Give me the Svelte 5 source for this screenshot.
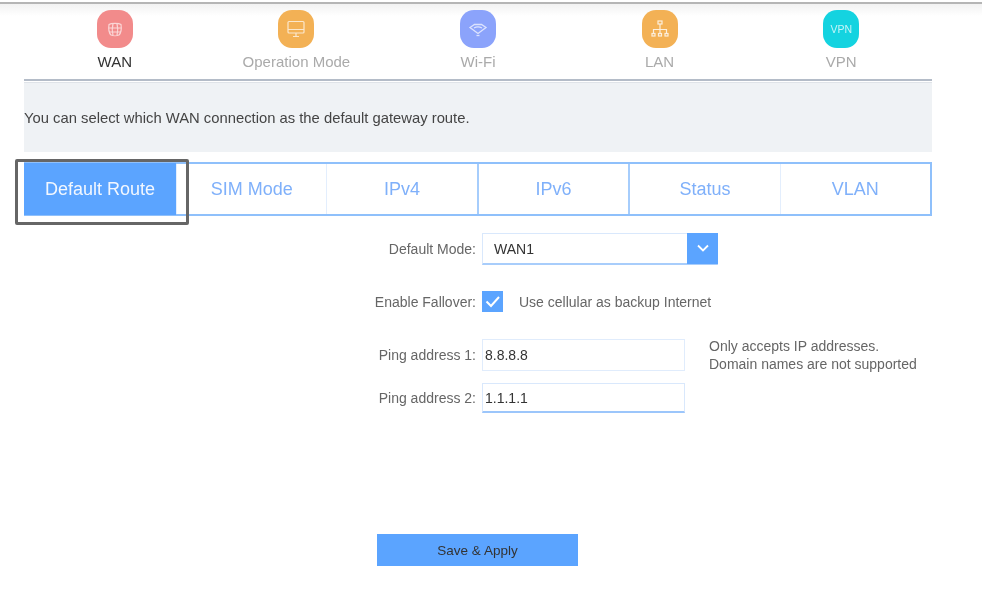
<script>
    const navItems = [
        { id: 'wan', label: 'WAN', color: '#f28b8b', active: true },
        { id: 'mode', label: 'Operation Mode', color: '#f3b155' },
        { id: 'wifi', label: 'Wi-Fi', color: '#8ba3fb' },
        { id: 'lan', label: 'LAN', color: '#f3b155' },
        { id: 'vpn', label: 'VPN', color: '#14d3e0' }
    ];

    const tabs = ['Default Route', 'SIM Mode', 'IPv4', 'IPv6', 'Status', 'VLAN'];
</script>

<div class="page">
    <div class="topbar"></div>

    <div class="content">
        <nav class="nav">
            {#each navItems as item}
                <div class="nav__item">
                    <div class="nav__icon" style={`background-color: ${item.color};`}>
                        {#if item.id === 'wan'}
                            <svg width="20" height="20" viewBox="0 0 20 20" fill="none" stroke="#fff" stroke-width="1.2" opacity="0.65">
                                <path d="M4 5.500c2-1.500 10-1.500 12 0 .6 4 .4 8-2 10.500-2 1-6 1-8 0-2.400-2.500-2.600-6.500-2-10.500z" />
                                <path d="M3.800 9h12.400M4.500 13h11M8 4.500c-1 4-1 8 0 12M12 4.500c1 4 1 8 0 12" />
                            </svg>
                        {:else if item.id === 'mode'}
                            <svg width="22" height="22" viewBox="0 0 22 22" fill="none" stroke="#fff" stroke-width="1.2" opacity="0.7">
                                <rect x="3" y="3.500" width="16" height="11.500" rx="1" />
                                <path d="M3 11.500h16M8 18.500h6M11 15v3.500" />
                            </svg>
                        {:else if item.id === 'wifi'}
                            <svg width="22" height="22" viewBox="0 0 22 22" fill="none" stroke="#fff" stroke-width="1.300" opacity="0.7">
                                <path d="M3 9.500 7.500 6.500h7L19 9.500 11 15.500z" />
                                <path d="M7 10c2.400-1.400 5.600-1.400 8 0" />
                                <path d="M9.500 17.500h3" />
                            </svg>
                        {:else if item.id === 'lan'}
                            <svg width="22" height="22" viewBox="0 0 22 22" fill="none" stroke="#fff" stroke-width="1.200" opacity="0.8">
                                <rect x="9" y="3" width="4" height="3" />
                                <path d="M11 6v9M4.500 15v-3.500h13V15" />
                                <rect x="3" y="15.500" width="3" height="2.500" />
                                <rect x="9.500" y="15.500" width="3" height="2.500" />
                                <rect x="16" y="15.500" width="3" height="2.500" />
                            </svg>
                        {:else}
                            <span class="nav__vpn">VPN</span>
                        {/if}
                    </div>
                    <span class="nav__label" class:nav__label--active={item.active}>{item.label}</span>
                </div>
            {/each}
        </nav>

        <div class="info">
            <p class="info__text">You can select which WAN connection as the default gateway route.</p>
        </div>

        <div class="tabs">
            {#each tabs as tab, i}
                <div class="tab" class:tab--active={i === 0}>{tab}</div>
            {/each}
            <div class="tabs__focus"></div>
        </div>

        <form class="form">
            <div class="form__row form__row--select">
                <span class="form__label">Default Mode:</span>
                <div class="select">
                    <span class="select__value">WAN1</span>
                    <span class="select__arrow">
                        <svg width="14" height="10" viewBox="0 0 14 10" fill="none" stroke="#fff" stroke-width="1.800">
                            <path d="M2 2.500 7 7.500 12 2.500" />
                        </svg>
                    </span>
                </div>
            </div>

            <div class="form__row form__row--check">
                <span class="form__label">Enable Fallover:</span>
                <span class="check">
                    <svg width="21" height="21" viewBox="0 0 21 21" fill="none" stroke="#fff" stroke-width="2">
                        <path d="M4.500 10.500 9 15 17 6" />
                    </svg>
                </span>
                <span class="check__text">Use cellular as backup Internet</span>
            </div>

            <div class="form__row form__row--ping1">
                <span class="form__label">Ping address 1:</span>
                <div class="input">8.8.8.8</div>
                <div class="help">Only accepts IP addresses.<br />Domain names are not supported</div>
            </div>

            <div class="form__row form__row--ping2">
                <span class="form__label">Ping address 2:</span>
                <div class="input input--focus">1.1.1.1</div>
            </div>

            <div class="form__actions">
                <div class="save">Save &amp; Apply</div>
            </div>
        </form>
    </div>
</div>

<style>
    :global(body) {
        background-color: #fff;
    }

    .page {
        position: relative;

        width: 982px;
        height: 592px;

        font-family: "Liberation Sans", Arial, sans-serif;
        color: #555;

        overflow: hidden;
        filter: blur(0.7px);
    }

    .topbar {
        height: 12px;
        margin-top: 2px;

        border-top: 2px solid #b5b5b5;
        background: linear-gradient(#f2f2f2, #fff);
    }

    .content {
        width: 908px;
        margin-left: 24px;
    }

    .nav {
        display: flex;

        margin-top: -6px;
        height: 69px;

        border-bottom: 2px solid #b4bcc8;
    }

    .nav__item {
        flex: 1;

        display: flex;
        flex-direction: column;
        align-items: center;
    }

    .nav__icon {
        display: flex;
        align-items: center;
        justify-content: center;

        width: 36px;
        height: 38px;

        border-radius: 14px;
    }

    .nav__vpn {
        font-size: 10.5px;
        color: #fff;
        opacity: 0.75;
    }

    .nav__label {
        margin-top: 6px;

        font-size: 15px;
        line-height: 16px;
        color: #aaa;
    }

    .nav__label--active {
        color: #333;
    }

    .info {
        display: flex;
        align-items: center;

        height: 69px;
        margin-top: 1px;

        border-top: 1px solid #dfe3e8;
        background-color: #eff2f5;
    }

    .info__text {
        margin: 0;

        font-size: 14.8px;
        color: #444;
    }

    .tabs {
        position: relative;

        display: flex;

        height: 54px;
        margin-top: 10px;
        box-sizing: border-box;

        border: 2px solid #8fc0fb;
    }

    .tab {
        flex: 1;

        display: flex;
        align-items: center;
        justify-content: center;

        font-size: 18px;
        color: #7fb0fa;

        border-left: 1px solid #e3eefd;
    }

    .tab:nth-child(4),
    .tab:nth-child(5) {
        border-left: 2px solid #a6cdfc;
    }

    .tab--active {
        flex: 0 0 152px;
        margin: -1px 0 -1px -2px;

        border-left: none;

        color: #f2f7ff;
        background-color: #5ba4ff;
    }

    .tabs__focus {
        position: absolute;
        top: -5px;
        left: -11px;

        width: 174px;
        height: 66px;
        box-sizing: border-box;

        border: 3px solid #666;
        border-radius: 2px;
    }

    .form {
        display: flex;
        flex-direction: column;
        margin-top: 17px;

        font-size: 14px;
        color: #666;
    }

    .form__row {
        display: flex;
        align-items: center;
    }

    .form__label {
        width: 452px;
        margin-right: 6px;

        text-align: right;
    }

    .select {
        display: flex;
        align-items: center;
        justify-content: space-between;

        width: 236px;
        height: 32px;
        box-sizing: border-box;
        padding-left: 11px;

        border: 1px solid #d9e8fc;
        border-bottom: 2px solid #a8cdfb;

        color: #333;
    }

    .select__arrow {
        display: flex;
        align-items: center;
        justify-content: center;

        width: 31px;
        height: 31px;
        margin-top: -1px;
        margin-right: -1px;

        background-color: #5ba4ff;
    }

    .form__row--check {
        margin-top: 26px;
    }

    .check {
        display: flex;

        width: 21px;
        height: 21px;

        background-color: #5ba4ff;
    }

    .check__text {
        margin-left: 16px;
    }

    .form__row--ping1 {
        margin-top: 25px;
    }

    .form__row--ping2 {
        margin-top: 10px;
    }

    .input {
        display: flex;
        align-items: center;

        width: 203px;
        height: 32px;
        box-sizing: border-box;
        padding-left: 2px;

        border: 1px solid #e0ecfc;

        color: #333;
    }

    .input--focus {
        height: 30px;

        border-color: #d9e8fc;
        border-bottom: 2px solid #9cc6fb;
    }

    .help {
        margin-left: 24px;

        font-size: 14px;
        line-height: 18px;
    }

    .form__actions {
        margin-top: 121px;
        margin-left: 353px;
    }

    .save {
        display: flex;
        align-items: center;
        justify-content: center;

        width: 201px;
        height: 32px;

        font-size: 13.5px;
        color: #333;
        background-color: #5ba4ff;
    }
</style>
